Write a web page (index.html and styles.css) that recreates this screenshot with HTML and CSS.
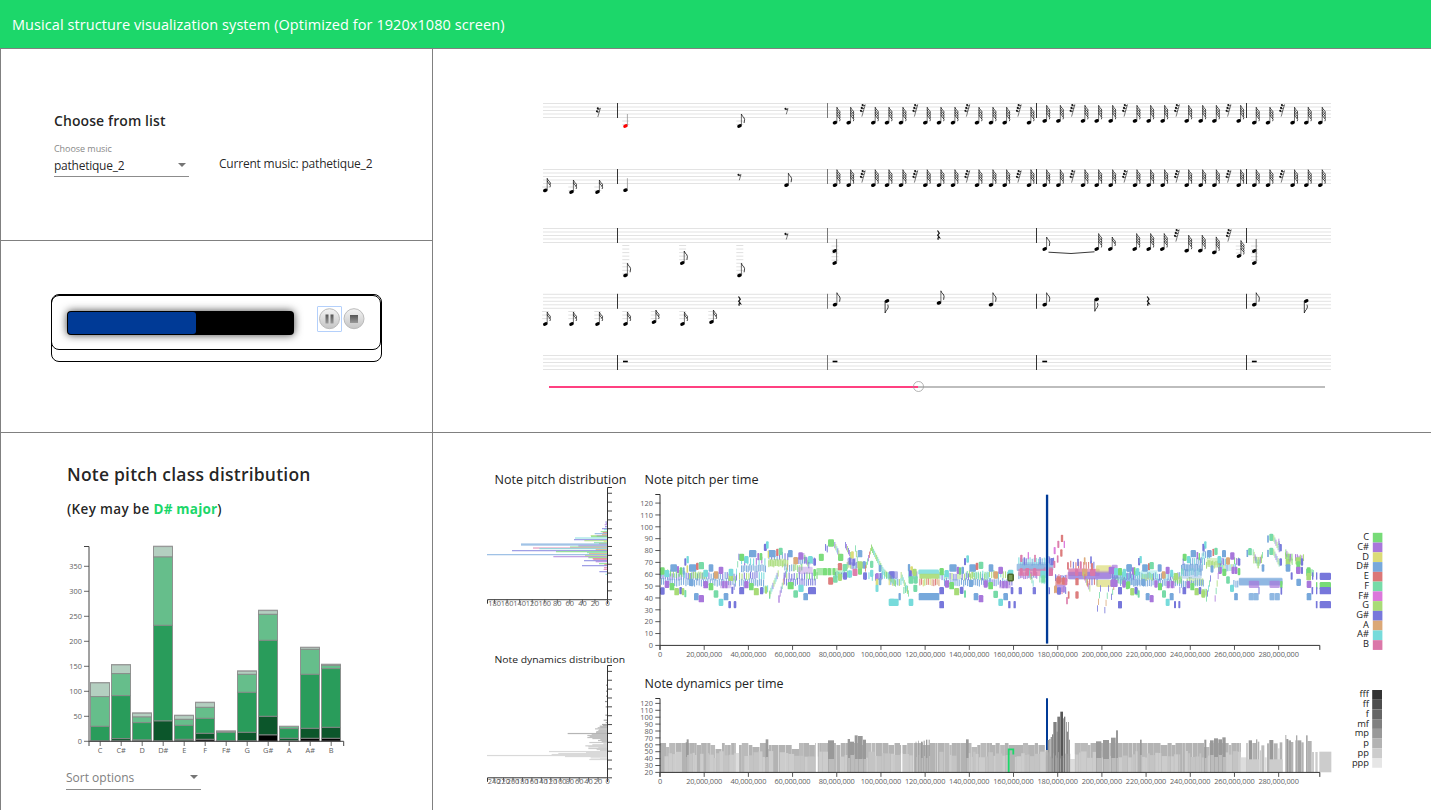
FILE: index.html
```html
<!DOCTYPE html>
<html lang="en">
<head>
<meta charset="utf-8">
<title>Musical structure visualization system</title>
<link rel="stylesheet" href="styles.css">
</head>
<body>
<header class="topbar"><span class="topbar-title">Musical structure visualization system (Optimized for 1920x1080 screen)</span></header>
<main class="board">
  <section class="panel chooser">
    <h2 class="chooser-title"><span>Choose from list</span></h2>
    <div class="chooser-row">
      <div class="select">
        <div class="select-label">Choose music</div>
        <div class="select-value"><span class="value-text">pathetique_2</span><i class="arrow"></i></div>
      </div>
      <div class="current"><span>Current music: pathetique_2</span></div>
    </div>
  </section>
  <section class="panel score">
    <svg class="score-svg" id="score" viewBox="433 49 998 329"></svg>
    <div class="slider"><div class="slider-fill"></div><div class="slider-rest"></div><div class="slider-thumb"></div></div>
  </section>
  <section class="panel player-panel">
    <div class="player">
      <div class="player-inner">
        <div class="progress"><div class="progress-fill"></div></div>
        <div class="buttons">
          <div class="btn focused"><svg viewBox="0 0 25 25" class="btn-svg"><defs><linearGradient id="face" x1="0" y1="0" x2="0" y2="1"><stop offset="0" stop-color="#f4f4f4"/><stop offset="1" stop-color="#c4c4c4"/></linearGradient><linearGradient id="glyph" x1="0" y1="0" x2="0" y2="1"><stop offset="0" stop-color="#555"/><stop offset="1" stop-color="#999"/></linearGradient></defs><circle cx="12.5" cy="12.7" r="10" fill="url(#face)" stroke="#bbb"/><path d="M8.5 8.5h3v9h-3zM13.5 8.5h3v9h-3z" fill="url(#glyph)"/></svg></div>
          <div class="btn"><svg viewBox="0 0 25 25" class="btn-svg"><circle cx="12" cy="12.7" r="10" fill="url(#face)" stroke="#bbb"/><path d="M8 9h8v8H8z" fill="url(#glyph)"/></svg></div>
        </div>
      </div>
    </div>
  </section>
  <section class="panel classes">
    <h1 class="classes-title"><span>Note pitch class distribution</span></h1>
    <h2 class="classes-key"><span>(Key may be <b class="key">D# major</b>)</span></h2>
    <svg class="class-svg" id="classes" viewBox="1 535 431 225"></svg>
    <div class="select sort"><div class="select-value"><span class="sort-text">Sort options</span><i class="arrow"></i></div></div>
  </section>
  <section class="panel charts">
    <svg class="charts-svg" id="charts" viewBox="433 433 998 377"></svg>
  </section>
</main>
<script src="app.js"></script>
</body>
</html>
```
FILE: styles.css
```css
* { box-sizing: border-box; }
body { margin: 0; height: 810px; overflow: hidden; background: #fff; color: rgba(0,0,0,.87); font-family: "Open Sans", "Noto Sans", sans-serif; }
h1, h2 { margin: 0; }
svg { display: block; }
.topbar { height: 48px; padding: 2px 0 0 12px; display: flex; align-items: center; background: #1cd76a; color: #fff; }
.topbar-title { font-size: 14.5px; letter-spacing: .07px; line-height: 20px; white-space: nowrap; }
.board { display: grid; grid-template-columns: 432px 999px; grid-template-rows: 192px 192px 378px; }
.panel { border-left: 1px solid #808080; border-top: 1px solid #808080; min-width: 0; overflow: hidden; }
.chooser { grid-area: 1 / 1; padding: 62px 0 0 53px; }
.chooser-title { font-size: 14px; line-height: 20px; font-weight: 600; letter-spacing: .09px; }
.chooser-row { display: flex; gap: 30px; margin-top: 11px; }
.select { width: 135px; border-bottom: 1px solid #8c8c8c; }
.select-label { font-size: 9px; line-height: 14px; color: #888; letter-spacing: -.05px; }
.select-value { display: flex; justify-content: space-between; align-items: center; height: 20px; padding-right: 2px; font-size: 12px; line-height: 20px; font-weight: 400; }
.arrow { border: 4px solid transparent; border-top-color: #757575; border-bottom: 0; margin: -2px 1px 0 0; }
.current { font-size: 12px; line-height: 20px; padding-top: 12px; letter-spacing: -.2px; white-space: nowrap; }
.value-text { letter-spacing: -.25px; }
.score { grid-area: 1 / 2 / 3 / 3; }
.score-svg { width: 998px; height: 329px; }
.slider { position: relative; display: flex; width: 776px; margin-left: 116px; padding-top: 8px; }
.slider-fill { width: 369px; height: 2px; background: #ff4081; }
.slider-rest { flex: 1; height: 2px; background: #bdbdbd; }
.slider-thumb { position: absolute; left: 363.5px; top: 3px; width: 11px; height: 11px; border: 1.5px solid rgba(150,150,150,.7); border-radius: 50%; }
.player-panel { grid-area: 2 / 1; padding: 53px 0 0 50px; }
.player { width: 331px; height: 68px; border: 1px solid #000; border-radius: 8px; }
.player-inner { display: flex; width: 330px; height: 55px; margin-left: -1px; border: 1px solid #000; border-radius: 8px; }
.progress { width: 227px; height: 24px; margin: 15px 0 0 15px; padding: 1px; background: #000; border-radius: 4px; box-shadow: 0 0 9px #444; }
.progress-fill { width: 128px; height: 22px; background: #003a96; border-radius: 3px; }
.buttons { display: flex; margin: 10px 0 0 23px; }
.btn { width: 25px; height: 26px; }
.btn.focused { outline: 1.5px solid #b4d0fb; outline-offset: -1px; border-radius: 1px; }
.btn-svg { width: 25px; height: 25px; }
.classes { grid-area: 3 / 1; }
.classes-title { margin: 29px 0 0 66px; font-size: 17.5px; line-height: 24px; font-weight: 600; letter-spacing: .21px; }
.classes-key { margin: 13px 0 0 66px; font-size: 13.5px; line-height: 20px; font-weight: 600; letter-spacing: .33px; }
.key { color: #1cd76a; font-weight: 700; letter-spacing: .2px; }
.class-svg { width: 431px; height: 225px; margin-top: 16px; }
.sort { margin: 8px 0 0 65px; height: 22px; color: #808080; }
.sort .arrow { margin-right: 1px; }
.charts { grid-area: 3 / 2; }
.charts-svg { width: 998px; height: 377px; }
.tick-text { font-size: 7.4px; fill: #606060; font-weight: 400; }
.chart-title { font-size: 12px; fill: #222; font-weight: 500; }
.small-title { font-size: 9.5px; fill: #222; font-weight: 500; }
.legend-text { font-size: 9.3px; fill: #222; }
```
FILE: app.js
```js
const NS = 'http://www.w3.org/2000/svg';
function el(p, n, a, t) {
  const e = document.createElementNS(NS, n);
  for (const k in a) e.setAttribute(k, a[k]);
  if (t !== undefined) e.textContent = t;
  p.appendChild(e);
  return e;
}
const rect = (p, x, y, w, h, fill, o) => el(p, 'rect', Object.assign({ x, y, width: w, height: h, fill }, o));
const path = (p, d, o) => el(p, 'path', Object.assign({ d, fill: 'none', stroke: '#222' }, o));
let seed = 7;
const rnd = () => (seed = (seed * 16807) % 2147483647) / 2147483647;

/* ---------- score ---------- */
const sc = document.getElementById('score');
const tops = [103.5, 169.5, 228.5, 294.3, 355.5];
for (const t of tops) {
  for (let i = 0; i < 5; i++) path(sc, `M543 ${t + i * 3.5}H1331`, { stroke: '#e0e0e0', 'stroke-width': 0.9 });
  for (const x of [617.5, 827.5, 1036.5, 1246.5]) path(sc, `M${x} ${t - .5}v15`, { stroke: x === 827.5 ? '#777' : '#333' });
}
function ledger(x, y0, y1) {
  for (let y = y0; y <= y1; y += 3.55) path(sc, `M${x - 3.2} ${y}h7`, { stroke: '#ddd', 'stroke-width': 0.9 });
}
function head(x, y, c) {
  el(sc, 'ellipse', { cx: x, cy: y, rx: 2.4, ry: 1.7, fill: c || '#000', transform: `rotate(-22 ${x} ${y})` });
}
function note(x, y, flags, c) {
  const h = flags > 2 ? 15.5 : 12;
  const sx = x + 1.9;
  head(x, y, c);
  path(sc, `M${sx} ${y - .5}V${y - h}`, { stroke: flags ? '#333' : '#888', 'stroke-width': .7 });
  for (let i = 0; i < flags; i++) {
    const f = y - h + i * 2.5;
    const l = flags === 1 ? 9 : 6.5;
    path(sc, `M${sx} ${f}q.3 2 2.3 3.2q1.6 1.5 .4 ${l - 3.2}`, { stroke: '#111', 'stroke-width': flags > 2 ? .75 : .8 });
  }
}
function down(x, y) {
  head(x, y);
  path(sc, `M${x - 1.9} ${y}v12q.6 -2.2 2.3 -3.8q1.5 -2 .4 -4.6`, { 'stroke-width': .85 });
}
function rest(x, y, n) {
  const h = 3 + n * 3;
  path(sc, `M${x + 1.7 + n * .35} ${y}l${-1 - n * .8} ${h}`, { 'stroke-width': .6 });
  for (let i = 0; i < n; i++) {
    const yy = y + i * 2.9 + .4, xx = x - .8 + n * .3 - i * .85;
    el(sc, 'circle', { cx: xx, cy: yy, r: 1.05, fill: '#111' });
    path(sc, `M${xx} ${yy + .8}q1.5 .4 2.5 -.8`, { 'stroke-width': .8, stroke: '#111' });
  }
}
function quarterRest(x, y) {
  path(sc, `M${x - .8} ${y - 4.5}l1.8 2.7l-1.6 2l1.8 2.5q-2.3 -.6 -1.2 2`, { stroke: '#111', 'stroke-width': 1.2 });
}
const steps = [0, 13.7, -27.5, 38.3, 52, 66, -80, 90.3, 104, 118, -132, 142, 156, 169.7, -183.5, 194];
function run(x0, y, ry, n) {
  steps.slice(0, n || 16).forEach(s => { s < 0 ? rest(x0 - s, ry + .6, 3) : note(x0 + s, y, 4); });
}
rest(598, 108, 2);
ledger(625.5, 121, 126); ledger(739.5, 121, 126);
note(625.5, 126, 0, '#f00'); note(739.5, 126, 1); rest(786, 108.3, 1);
run(835, 122.7, 104, 16); run(1044.7, 120.8, 104, 16); run(1254.3, 122.7, 104, 6);
ledger(571.5, 187, 191); ledger(597.5, 187, 191); ledger(545.3, 187, 189);
note(545.3, 190.3, 2); note(571.5, 192, 2); note(597.5, 192, 2); note(625.5, 190.2, 0);
rest(739, 174.3, 1); note(786.5, 185.2, 1);
run(835, 185.2, 170, 16); run(1044.7, 185.2, 170, 16); run(1254.3, 185.2, 170, 6);
ledger(625.5, 245.5, 276); ledger(682.3, 245.5, 263); ledger(739.5, 245.5, 276);
note(625.5, 275.3, 1); note(682.3, 263, 1); note(739.5, 275.3, 1); rest(786, 233.5, 1);
for (const x of [834.7, 1254.3]) {
  ledger(x, 246, 263); head(x, 251); head(x, 263);
  path(sc, `M${x + 1.9} 263V239`, { stroke: '#555', 'stroke-width': .8 });
}
quarterRest(938.3, 235); note(1044.7, 249, 1);
path(sc, 'M1048.5 252.2q22 2.8 46 -.4', { 'stroke-width': .9 });
note(1096.7, 249, 4); note(1110.3, 249, 2);
note(1134.7, 249, 4); note(1148.7, 249, 4); note(1162.3, 249, 4); rest(1176.5, 229.6, 3);
note(1186.7, 250.7, 4); note(1200.3, 250.7, 4); note(1214.3, 252.4, 4); rest(1228.5, 229.6, 3);
ledger(1239, 246, 256); note(1239, 256, 4);
[[545.3, 324], [571.5, 324], [597.5, 324], [625.5, 324], [654, 322], [682.5, 324], [711.5, 322]].forEach(([x, y]) => { ledger(x, 311.5, 322); note(x, y, 2); });
quarterRest(739.3, 301); quarterRest(1148, 301);
note(835, 304.7, 1); down(887, 301); note(939, 302.8, 1); note(991, 304.7, 1);
note(1044.7, 304.7, 1); down(1096.7, 299.3); note(1254.3, 304.7, 1); down(1306.2, 301);
[625.4, 835, 1044.7, 1254.3].forEach(x => rect(sc, x - 2.4, 360.7, 4.8, 1.6, '#000'));

/* ---------- pitch classes ---------- */
const cl = document.getElementById('classes');
const shade = ['#b4cfc0', '#66be8b', '#299c5b', '#0c562b', '#000'];
const bars = [
  ['C', 698, 740, 829, 873, 873], ['C#', 644, 671, 737, 866, 873], ['D', 789, 801, 818, 870, 873],
  ['D#', 289, 321, 526, 813, 873], ['E', 796, 808, 826, 868, 873], ['F', 757, 772, 805, 850, 868],
  ['F#', 843, 845, 847, 873, 873], ['G', 663, 673, 727, 847, 873], ['G#', 481, 493, 571, 799, 855],
  ['A', 829, 829, 836, 865, 873], ['A#', 592, 598, 673, 835, 865], ['B', 643, 646, 656, 832, 865]];
const by = v => 450 + v / 3;
bars.forEach((b, i) => {
  const x = 90.5 + i * 21;
  for (let k = 0; k < 5; k++) {
    const a = by(b[k + 1]), z = k < 4 ? by(b[k + 2]) : 741.2;
    if (z - a > .2) rect(cl, x, a, 19, z - a, shade[k], { stroke: '#8a8a8a', 'stroke-width': .9 });
  }
  rect(cl, x - .4, by(b[1]) - .6, 19.8, 1.4, '#999', { opacity: .7 });
  path(cl, `M${x + 9.7} 741v5`, { stroke: '#444', 'stroke-width': .8 });
  el(cl, 'text', { x: x + 9.7, y: 753, 'text-anchor': 'middle', class: 'tick-text' }, b[0]);
});
path(cl, 'M84 546.5H89V741.3H343.7V746M89 741V746', { stroke: '#444' });
for (let v = 0; v <= 350; v += 50) {
  const y = 741.3 - v / 2;
  path(cl, `M84 ${y}h5`, { stroke: '#444', 'stroke-width': .8 });
  el(cl, 'text', { x: 82, y: y + 2.7, 'text-anchor': 'end', class: 'tick-text' }, v);
}

/* ---------- charts ---------- */
const ch = document.getElementById('charts');
const col = { C: '#77db77', c: '#a877db', D: '#dbdb77', d: '#77a8db', E: '#db7777', F: '#77dba8', f: '#db77db', G: '#a8db77', g: '#7777db', A: '#dba877', a: '#77dbdb', B: '#db77a8' };
const title = (x, y, s, w, c) => el(ch, 'text', { x, y, class: c || 'chart-title', textLength: w, lengthAdjust: 'spacingAndGlyphs' }, s);
title(494.5, 484, 'Note pitch distribution', 132);
title(644.5, 484, 'Note pitch per time', 114);
title(494.5, 663, 'Note dynamics distribution', 130.5, 'small-title');
title(644.5, 688, 'Note dynamics per time', 139);

const pd = '391 185 g,392 189 c,389 193 c,390 199 g,381 205 g,387 208 a,377 214 C,383 217 E,359 220 d,381 223 A,347 226 G,365 227 c,348 229 C,300 233 a,297 238 g,328 241 G,386 244 D,357 247 F,372 250 A,138 251 d,138 254 d,310 257 c,285 260 C,174 263 B,193 265 a,362 268 A,111 271 g,243 274 C,336 277 F,342 280 A,36 283 d,330 286 G,235 289 c,340 292 C,353 295 E,355 298 B,327 301 g,362 304 c,372 310 C,388 313 E,321 316 g,387 322 B,386 327 B,373 334 g,391 342 a';
pd.split(',').forEach(s => {
  const [x, y, c] = s.split(' ');
  rect(ch, 475 + x / 3, 459.8 + y / 3, 132.3 - x / 3, 1.1, col[c], { opacity: .8 });
});
const dd = '393 675 5,393 693 5,393 708 5,390 724 5,392 740 5,391 765 6,386 780 7,392 787 7,381 793 7,384 796 7,374 798 8,376 801 8,368 803 8,360 806 9,372 809 9,370 811 9,364 814 9,363 817 9,278 820 8,350 823 9,337 826 9,344 829 9,337 832 9,352 835 9,376 838 9,369 841 9,380 844 9,343 847 10,385 851 10,352 854 10,331 857 10,340 860 10,370 863 10,340 865 10,365 868 10,375 871 10,222 874 11,333 877 11,250 880 11,230 883 11,36 886 11,270 889 11,347 893 11,375 896 11,343 898 11';
dd.split(',').forEach(s => {
  const [x, y, g] = s.split(' ').map(Number), v = 85 + g * 12;
  rect(ch, 475 + x / 3, 459.6 + y / 3, 132.3 - x / 3, 1.2, `rgb(${v},${v},${v})`);
});
function sideAxis(y0, y1, step, sp, max) {
  path(ch, `M612 ${y0}H607.5V${y1}H487.5v4M607.5 ${y1}v4`, { stroke: '#333' });
  for (let i = 0; i < 13; i++) path(ch, `M607.5 ${y1 - i * step}h4.5`, { stroke: '#333', 'stroke-width': .9 });
  for (let v = 0, x = 607.5; v <= max; v += 20, x -= sp) {
    path(ch, `M${x} ${y1}v4`, { stroke: '#333', 'stroke-width': .8 });
    el(ch, 'text', { x, y: y1 + 6.2, 'text-anchor': 'middle', class: 'tick-text' }, v);
  }
}
sideAxis(487.5, 599.7, 8.87, 12.55, 180);
sideAxis(665.5, 777.8, 8.87, 9.45, 240);

const marks = ch;
function block(ox, s, op, h) {
  s.split(',').forEach(t => {
    const [x, y, w, c] = t.trim().split(' ');
    rect(marks, ox + (x - w / 2) / 3, 465 + y / 3 - (h || 7.4) / 2, w / 3, h || 7.4, col[c], { rx: Math.min(1.2, w / 8), opacity: op });
  });
}
function band(ox, x0, x1, y, cs, gap, op, h) {
  let i = 0;
  for (let x = x0; x < x1; x += gap + rnd() * 1.5, i++) {
    const dy = (rnd() - .5) * 6;
    rect(marks, ox + x / 3, 461.6 + (+y + dy) / 3, 1.1, h || 6.8, col[cs[Math.floor(rnd() * cs.length)]], { opacity: op || .92 });
  }
}
function sweep(ox, x0, y0, x1, y1, cs) {
  const n = Math.max(3, Math.round(Math.abs(x1 - x0) / 3.2));
  for (let i = 0; i <= n; i++) {
    const t = i / n;
    rect(marks, ox + (x0 + (x1 - x0) * t) / 3, 462 + (y0 + (y1 - y0) * t) / 3, 1, 6.3, col[cs[i % cs.length]], { opacity: .8 });
  }
}
const P = 635, Q = 880, R = 1110;
// accompaniment patterns
[[P, 76, 305, 334, 'gdg', 6], [P, 78, 305, 352, 'dd', 6], [P, 162, 212, 332, 'GC', 5], [P, 78, 150, 326, 'CGa', 8],
 [P, 312, 345, 334, 'gG', 6], [P, 312, 390, 352, 'd', 5], [P, 318, 395, 309, 'd', 4.5], [P, 318, 395, 288, 'cda', 8], [P, 345, 385, 332, 'ga', 6], [P, 385, 400, 370, 'Fa', 5],
 [P, 400, 458, 296, 'G', 4.5], [P, 400, 458, 273, 'gd', 7], [P, 448, 480, 308, 'd', 6], [P, 446, 545, 334, 'CgG', 7], [P, 446, 545, 350, 'dg', 6], [P, 475, 500, 308, 'CG', 5], [P, 490, 540, 287, 'gd', 5],
 [P, 570, 580, 250, 'gG', 5], [P, 600, 645, 330, 'gFa', 4], [P, 635, 690, 300, 'gdG', 4], [P, 690, 740, 335, 'gda', 9],
 [Q, 5, 30, 330, 'aF', 6], [Q, 26, 62, 350, 'GDda', 4], [Q, 70, 85, 375, 'GF', 5], [Q, 85, 112, 330, 'ga', 5],
 [Q, 118, 178, 352, 'AEGD', 4.5], [Q, 178, 330, 334, 'aGg', 5.5], [Q, 192, 330, 352, 'd', 5.5], [Q, 260, 385, 328, 'FGa', 6], [Q, 320, 400, 352, 'dg', 6],
 [Q, 415, 520, 290, 'gda', 5], [Q, 478, 500, 345, 'aGF', 5], [Q, 415, 470, 330, 'dcB', 4], [Q, 525, 560, 340, 'gB', 4], [Q, 522, 560, 375, 'AgB', 5],
 [Q, 562, 640, 300, 'gBE', 7], [Q, 620, 650, 350, 'gE', 7], [Q, 695, 735, 345, 'CaFg', 4], [Q, 720, 780, 332, 'ga', 5], [Q, 735, 780, 352, 'd', 5],
 [R, 0, 210, 334, 'dga', 5], [R, 30, 215, 352, 'd', 5], [R, 95, 130, 335, 'G', 5], [R, 190, 215, 345, 'CG', 5],
 [R, 213, 275, 308, 'd', 4], [R, 213, 275, 322, 'da', 5], [R, 230, 280, 348, 'G', 5], [R, 213, 280, 356, 'd', 5], [R, 240, 285, 288, 'da', 5], [R, 275, 290, 380, 'GFg', 3],
 [R, 280, 300, 270, 'Dda', 5], [R, 288, 335, 298, 'G', 4], [R, 325, 380, 308, 'aGd', 5], [R, 325, 345, 290, 'ga', 4], [R, 372, 388, 290, 'cC', 5],
 [R, 370, 388, 355, 'd', 5], [R, 430, 456, 285, 'cG', 4], [R, 525, 548, 275, 'cGC', 3], [R, 555, 580, 280, 'cCG', 4], [R, 588, 608, 325, 'CGdF', 3]
].forEach(b => band(...b));
block(P, '427 292 54 G,511 316 44 c,583 320 75 C,650 290 26 g,272 359 34 c,555 320 24 C', .4);
block(P, '82 318 14 C,96 326 14 a,82 378 14 g,96 358 14 c,111 365 14 C,116 309 20 d,125 380 14 G,138 318 8 C,129 314 6 c,137 377 8 g,144 380 8 G,151 386 6 F,151 291 6 g,158 284 7 a,157 312 5 D,146 318 6 d,173 309 22 d,187 304 8 E,199 302 16 F,169 352 14 d,184 395 14 d,199 401 16 c,228 309 14 d,243 330 14 A,258 316 14 c,212 359 14 c,228 365 14 C,243 387 14 F,258 412 14 a,273 395 14 d,284 419 8 g,300 419 8 g,265 359 7 c,274 359 7 c,284 337 7 G,291 337 7 G,288 322 14 a,292 376 6 g,212 325 14 a,320 277 15 C,334 284 13 a,353 266 22 d,370 275 6 c,378 275 8 C,391 247 9 g,397 240 8 a,411 266 22 d,400 268 4 D,427 262 7 E,437 259 12 F,466 266 14 d,482 287 14 A,497 273 14 c,526 284 14 a,539 291 8 g,320 377 15 g,334 359 13 c,349 365 14 C,364 380 15 G,380 377 10 g,393 375 7 G,404 390 4 F,467 362 18 C,482 387 14 F,498 370 16 a,512 395 14 d,531 377 24 g,539 323 8 C', 1);
block(P, '559 277 15 C,588 234 18 C,617 277 16 C,652 270 9 D,675 266 14 d,570 320 12 C,583 320 10 C,597 320 8 C,615 305 13 E,630 308 14 F,587 348 15 E,601 342 14 F,615 337 12 G,630 333 12 g,645 327 12 a,660 322 15 B,645 288 8 g,656 292 8 g,675 318 12 C,690 333 12 g,675 300 13 G,688 300 10 d,710 325 10 a,710 298 10 F,726 335 9 c,726 352 8 D,726 370 9 a,737 335 5 g,770 412 18 a,770 330 18 g,432 402 4 c', .95);
sweep(P, 296, 365, 310, 275, 'gCaF'); sweep(P, 403, 385, 428, 325, 'GFag'); sweep(P, 434, 385, 456, 305, 'cgFA'); sweep(P, 598, 240, 610, 265, 'gGa'); sweep(P, 630, 240, 645, 270, 'gcG'); sweep(P, 660, 250, 668, 300, 'FG'); sweep(P, 690, 310, 708, 248, 'EGFc'); sweep(P, 708, 248, 742, 315, 'GCFa'); sweep(P, 745, 320, 780, 355, 'aFGC'); sweep(P, 505, 273, 520, 300, 'cCg');
block(Q, '42 330 24 g,375 359 34 c', .55);
block(Q, '146 321 62 a', .85, 5); block(Q, '148 334 60 G', .9, 5); block(Q, '100 344 28 F', .6);
block(Q, '0 310 8 d,0 350 8 d,42 412 28 a,59 395 7 d,87 308 7 d,95 315 8 D,91 327 9 g,93 345 14 F,107 345 10 F,104 322 12 G,106 370 12 F,93 412 14 a,147 395 62 d,185 320 13 C,185 377 14 g,200 326 13 a,185 419 14 g,201 357 13 c,219 309 22 d,234 316 8 c,240 318 7 C,248 316 8 d,255 290 6 g,263 282 8 a,215 362 14 C,230 380 15 G,245 376 11 g,255 387 6 F,278 309 20 d,291 304 8 E,303 301 14 F,288 395 14 d,303 401 14 c,273 355 13 d,333 309 14 d,347 330 14 A,362 316 14 c,317 357 12 c,332 362 14 C,347 388 14 F,362 412 14 a,377 395 14 d,370 359 7 c,380 359 7 c,388 419 7 g,404 419 7 g,396 377 8 g,392 325 16 a', 1);
block(Q, '465 307 110 d,467 322 104 B,612 322 94 B,628 331 130 c,671 312 46 D,671 355 44 D,541 350 30 E,541 370 32 c,704 310 18 c,704 330 20 g,700 352 14 c,505 318 28 B', .7);
block(Q, '628 333 124 g,465 302 90 d,590 320 50 B,671 328 50 c', .35);
block(Q, '424 280 7 B,433 288 5 g,445 272 4 f,465 280 5 B,480 287 4 g,421 377 10 g,463 377 10 g,505 377 10 g,424 320 8 B,442 320 12 B,464 320 10 B,490 328 18 a,490 342 12 F,511 322 16 B,505 284 8 g,516 290 10 g,524 257 6 f,535 238 6 B,546 220 7 E,553 238 4 f,544 264 7 E,533 282 5 B,523 298 6 B,536 345 12 E,551 348 10 E,527 372 8 A,537 378 12 g,558 350 8 B,561 407 5 B,566 390 5 E,564 303 5 E,591 390 10 E,591 350 10 E,594 292 5 g,602 300 5 B,614 288 5 A,614 322 16 A,590 322 10 B,638 322 16 B,633 285 5 g,636 305 6 E,720 320 12 C,720 377 11 g,720 419 11 g,733 322 10 a,748 309 16 d,762 318 6 c,773 320 10 a,742 362 9 C,757 380 11 G,770 380 9 F,778 290 5 g', .95);
sweep(Q, 447, 325, 458, 355, 'aGF'); sweep(Q, 660, 370, 651, 430, 'gFA'); sweep(Q, 684, 370, 673, 435, 'gFA'); sweep(Q, 703, 350, 693, 395, 'gEF'); sweep(Q, 62, 330, 84, 385, 'GFa'); sweep(Q, 610, 330, 628, 370, 'GEc');
block(R, '117 327 50 a,181 359 28 c,310 290 40 G,373 316 18 c,452 352 131 d,431 395 32 d,494 395 32 d,245 308 60 d,245 330 60 d', .4);
block(R, '452 349 131 d,424 395 14 d,438 395 14 d,486 395 14 d,502 395 14 d,432 358 31 c,494 358 31 c', .7);
block(R, '5 316 18 c,18 320 12 a,12 355 22 c,30 320 11 C,43 325 10 a,30 377 12 g,30 419 12 g,57 309 16 d,68 318 5 c,74 318 5 C,80 322 7 a,87 290 5 g,92 284 7 a,55 360 11 C,42 357 10 c,67 380 12 G,78 376 9 g,86 387 6 F,105 309 17 d,117 305 6 E,125 302 13 F,100 352 12 d,113 395 12 d,125 401 12 c,149 309 12 d,161 330 12 A,173 316 12 c,185 325 9 a,198 335 13 G,138 357 10 c,150 365 12 C,162 387 12 F,173 412 12 a,185 395 12 d,175 359 8 c,187 359 8 c,195 419 6 g,208 419 6 g,224 277 12 C,236 284 11 a,250 266 16 d,262 272 5 c,268 275 4 C,280 247 6 g,286 240 7 a,298 266 14 d,310 262 5 E,318 259 10 F,342 266 12 d,354 288 12 A,367 273 13 c,328 284 11 a,387 291 8 g,223 377 11 g,235 359 11 c,247 365 12 C,260 380 13 G,270 377 8 g,280 387 12 G,306 312 9 d,330 316 11 c,343 322 12 C,354 345 11 F,366 370 12 a,378 395 11 d,369 316 8 c,378 316 8 c,387 320 8 C', 1);
block(R, '447 377 3 g,514 359 7 C,514 378 5 g,412 265 5 d,420 260 11 F,459 309 8 d,474 222 5 d,484 217 12 F,512 248 7 g,474 265 5 d,484 259 12 F,512 291 8 g,534 293 14 G,534 309 14 d,545 333 6 g,565 288 17 G,565 300 12 C,565 316 14 c,576 291 7 g,576 316 6 g,566 352 14 d,596 318 12 C,596 335 14 G,597 358 14 c,597 395 14 d,607 377 5 g,620 333 4 g,608 333 4 g,620 362 4 C,620 377 4 g,620 419 5 g,646 334 34 g,646 362 34 C,646 377 34 g,646 419 34 g', 1);
sweep(R, 208, 375, 218, 290, 'gCF'); sweep(R, 272, 285, 284, 240, 'gad'); sweep(R, 288, 400, 300, 340, 'Fga'); sweep(R, 314, 400, 326, 310, 'cFG'); sweep(R, 428, 262, 443, 300, 'FGcd'); sweep(R, 490, 220, 506, 252, 'GFc'); sweep(R, 490, 262, 506, 295, 'GFcd'); sweep(R, 505, 230, 508, 250, 'cd'); sweep(R, 526, 262, 545, 290, 'CcG'); sweep(R, 443, 300, 456, 270, 'GFc');
rect(ch, 1008, 574.2, 5.2, 6.6, '#7a9a52', { stroke: '#4e6a2c', 'stroke-width': 1.6, rx: 1 });
path(ch, 'M1047.2 494.7V643.5', { stroke: '#a9bfe0', 'stroke-width': 3 });
path(ch, 'M1047 494.7V643.5', { stroke: '#003a96', 'stroke-width': 2 });
path(ch, 'M1047 698.3V750', { stroke: '#003a96', 'stroke-width': 2 });

// dynamics
const base = 772.3;
const bar = (x0, x1, top, c) => rect(ch, x0, top, x1 - x0, base - top, c);
for (let x = 660; x < 1241;) {
  const w = 2 + rnd() * 5.5;
  if (!(x > 1044 && x < 1069)) bar(x, Math.min(x + w, 1241), 743 + (rnd() < .25 ? 2 : 0) + (rnd() < .08 ? 4 : 0), rnd() < .2 ? '#bababa' : '#b3b3b3');
  x += w + (rnd() < .25 ? .4 : 0);
}
for (let x = 660.5; x < 1241;) {
  const w = 1.5 + rnd() * 5;
  const dense = (x > 912 && x < 937) || (x > 843 && x < 866);
  if (!(x > 1046 && x < 1069) && rnd() > (dense ? .75 : .1)) bar(x, Math.min(x + w, 1241), 751 + rnd() * 7, rnd() < .3 ? '#c4c4c4' : '#ccc');
  x += w + (rnd() < .5 ? .4 : 0);
}
[[P, 152, 156, 832], [P, 155, 161, 823], [P, 392, 400, 823], [P, 579, 597, 826], [P, 638, 645, 822], [P, 645, 657, 830], [P, 659, 668, 811], [P, 669, 683, 813], [P, 684, 693, 824],
 [Q, 107, 109, 830], [Q, 115, 117, 827], [Q, 123, 128, 830], [Q, 131, 134, 827], [Q, 138, 142, 824], [Q, 146, 149, 824], [Q, 258, 266, 823],
 [Q, 648, 664, 829], [Q, 669, 687, 825], [Q, 693, 707, 818], [Q, 708, 714, 796], [R, 90, 95, 824], [R, 283, 289, 824], [R, 300, 311, 826], [R, 312, 324, 820], [R, 325, 336, 823], [R, 337, 347, 817]
].forEach(([o, a, b, y]) => { bar(o + a / 3, o + b / 3, 465 + y / 3, '#999'); bar(o + a / 3 + .4, o + b / 3 + .5, 755 + (a % 5), '#bcbcbc'); });
// crescendo around the playback position
[[503, 507, 825, '#999'], [507, 512, 822, '#aaa'], [512, 516, 816, '#999'], [516, 520, 808, '#888'], [520, 530, 771, '#808080'], [530, 533, 800, '#888'], [532, 540, 755, '#7a7a7a'], [541, 549, 740, '#555'], [550, 553, 760, '#777'], [552, 556, 755, '#777'], [558, 560, 771, '#777'], [560, 564, 800, '#8a8a8a'], [565, 567, 771, '#777'], [567, 570, 824, '#999']].forEach(([a, b, y, c]) => bar(Q + a / 3, Q + b / 3, 465 + y / 3, c));
bar(1045.5, 1048, 750, '#b3b3b3');
for (let a = 500; a < 566; a += 5) bar(Q + a / 3, Q + a / 3 + .7, 752 + rnd() * 7, '#aaa');
rect(ch, Q + 571 / 3, 742, 4.4, 17, '#fff'); rect(ch, Q + 571 / 3, 759, 4.4, 13, '#ddd');
rect(ch, 735.8, 742, 3.2, 11, '#fff'); rect(ch, 735.8, 753, 3.2, 19, '#ddd');
rect(ch, 816, 742, 1.7, 30, '#fff'); rect(ch, 901.1, 742, 1.3, 30, '#fff');
// closing bars
[[392, 409, 877, '#ddd'], [409, 413, 834, '#b3b3b3'], [416, 426, 826, '#999'], [427, 438, 834, '#b3b3b3'], [438, 442, 823, '#aaa'], [443, 448, 830, '#b3b3b3'], [449, 453, 856, '#ccc'], [454, 463, 841, '#bbb'], [463, 470, 877, '#ddd'], [471, 477, 835, '#b3b3b3'], [478, 490, 825, '#999'], [491, 503, 835, '#b3b3b3'], [505, 508, 850, '#ccc'], [509, 517, 832, '#b3b3b3'], [414, 448, 883, '#ccc'], [478, 518, 883, '#ccc'], [526, 529, 810, '#aaa'], [529, 535, 822, '#999'], [535, 543, 826, '#a4a4a4'], [543, 550, 831, '#b3b3b3'], [556, 558, 826, '#b3b3b3'], [558, 562, 811, '#aaa'], [562, 574, 826, '#a4a4a4'], [574, 581, 832, '#b3b3b3'], [588, 593, 811, '#aaa'], [592, 605, 828, '#b3b3b3'], [605, 612, 861, '#ccc'], [616, 623, 861, '#ccc'], [628, 664, 860, '#ccc']].forEach(([a, b, y, c]) => bar(R + a / 3, R + b / 3, 465 + y / 3, c));
path(ch, 'M1008.7 773V749.4H1013.3V754.5', { stroke: '#1cd76a', 'stroke-width': 1.8 });

function timeAxis(top, bottom, lo, sc1) {
  path(ch, `M655.3 ${top}H660V${bottom}H1319.8v4.5M660 ${bottom}v4.5`, { stroke: '#333' });
  for (let v = lo; v <= 120; v += 10) {
    const y = bottom - (v - lo) * sc1;
    path(ch, `M655.3 ${y}h5`, { stroke: '#444', 'stroke-width': .9 });
    el(ch, 'text', { x: 653, y: y + 2.7, 'text-anchor': 'end', class: 'tick-text' }, v);
  }
  for (let i = 0; i <= 14; i++) {
    const x = 660 + i * 44.19;
    path(ch, `M${x} ${bottom}v4.5`, { stroke: '#444', 'stroke-width': .9 });
    el(ch, 'text', Object.assign({ x, y: bottom + 11.4, 'text-anchor': 'middle', class: 'tick-text' }, i ? { textLength: i > 4 ? 40.5 : 36 } : {}), (i * 20000000).toLocaleString('en-US'));
  }
}
timeAxis(494.5, 645.4, 0, 1.186);
timeAxis(698.5, 772.4, 20, .69);

['C', 'C#', 'D', 'D#', 'E', 'F', 'F#', 'G', 'G#', 'A', 'A#', 'B'].forEach((n, i) => {
  rect(ch, 1372.8, 532.8 + i * 9.76, 9.6, 9.76, Object.values(col)[i]);
  el(ch, 'text', { x: 1369, y: 540.2 + i * 9.72, 'text-anchor': 'end', class: 'legend-text' }, n);
});
['fff', 'ff', 'f', 'mf', 'mp', 'p', 'pp', 'ppp'].forEach((n, i) => {
  const v = 51 + Math.round(i * 25.5);
  rect(ch, 1372.2, 690 + i * 9.72, 9.8, 9.72, `rgb(${v},${v},${v})`);
  el(ch, 'text', { x: 1369, y: 697.3 + i * 9.76, 'text-anchor': 'end', class: 'legend-text' }, n);
});
```
